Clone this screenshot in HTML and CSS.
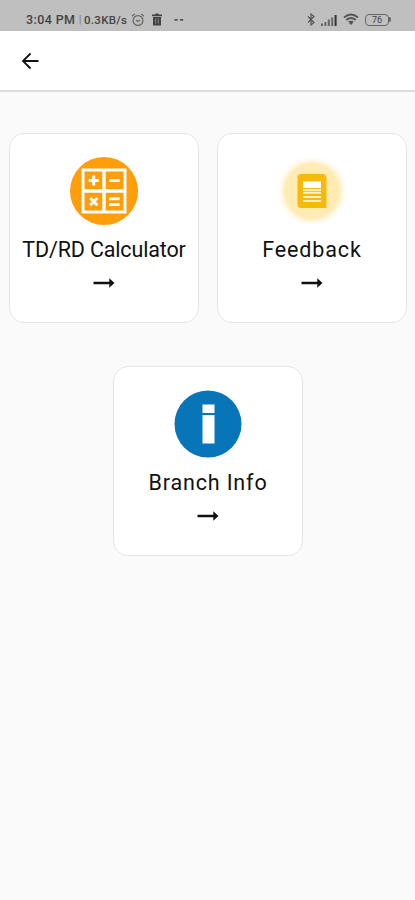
FILE: index.html
```html
<!DOCTYPE html>
<html lang="en">
<head>
    <meta charset="UTF-8">
    <meta name="viewport" content="width=device-width, initial-scale=1.0">
    <title>Services</title>
    <link rel="stylesheet" href="styles.css">
</head>
<body>
    <div class="status-bar">
        <div class="status-left">
            <span class="time">3:04 PM</span>
            <span class="divider">|</span>
            <span class="speed">0.3KB/s</span>
            <svg class="alarm" width="14" height="14" viewBox="0 0 14 14" fill="none" stroke="#666" stroke-width="1.2">
                <circle cx="7" cy="7.5" r="4.9"/>
                <path d="M1 3.2L3.6 1M13 3.2L10.4 1M5 7l2 1.4L9 7"/>
            </svg>
            <svg class="trash" width="12" height="13" viewBox="0 0 12 13">
                <path d="M1 1.5h3l.8-1h2.4l.8 1h3v1.8H1zM2 4h8v8.5H2z" fill="#444"/>
                <path d="M4.7 5.5v5M7.3 5.500v5" stroke="#888" stroke-width="1"/>
            </svg>
            <svg class="more" width="10" height="4" viewBox="0 0 10 4" fill="#555">
                <path d="M.5 1h3.200v1.800H.5zM6 1h3.200v1.800H6z"/>
            </svg>
        </div>
        <div class="status-right">
            <svg width="8" height="13" viewBox="0 0 8 13" fill="none" stroke="#555" stroke-width="1.2">
                <path d="M1 3.5l6 6L4 12V1l3 2.5-6 6"/>
            </svg>
            <svg width="16" height="12" viewBox="0 0 16 12" fill="#666">
                <path d="M0 9.5h2V12H0zM3.4 8h2v4h-2zM6.8 5.5h2V12h-2zM10.2 3.5h2V12h-2z"/>
                <path d="M13.6 1h2v11h-2z" fill="#333"/>
            </svg>
            <svg width="16" height="13" viewBox="0 0 16 13" fill="none" stroke="#555" stroke-width="1.7">
                <path d="M1 4.5Q8-1.5 15 4.5M3.3 7Q8 3 12.7 7"/>
                <path d="M5.2 8.8Q8 6.7 10.8 8.8L8 12z" fill="#555" stroke="none"/>
            </svg>
            <div class="battery">76</div>
        </div>
    </div>

    <header class="header">
        <svg width="18" height="18" viewBox="0 0 18 18" fill="none" stroke="#111" stroke-width="1.8">
            <path d="M17.500 9H2M9.500 1.500L2 9l7.500 7.500"/>
        </svg>
    </header>

    <main class="menu">
        <div class="card">
            <svg class="icon" width="68" height="68" viewBox="0 0 68 68">
                <circle cx="34" cy="34" r="34" fill="#ff9d0a"/>
                <path d="M13 13h42v42H13z" fill="none" stroke="#fff" stroke-width="3"/>
                <path d="M34 13v42M13 34h42" stroke="#fff" stroke-width="3.4"/>
                <path d="M18.7 23.5h10M23.7 18.5v10M39.2 23.5h10.6M39 41.8h10.6M39 47.4h10.6M20.2 41l7.2 7.2M27.4 41l-7.2 7.2" stroke="#fff" stroke-width="3"/>
            </svg>
            <div class="label label-calculator">TD/RD Calculator</div>
            <svg class="arrow" width="22" height="10" viewBox="0 0 22 10">
                <path d="M.5 3.800h15.800V.3L21.500 5l-5.200 4.700V6.200H.5z"/>
            </svg>
        </div>

        <div class="card">
            <div class="icon feedback-icon">
                <svg width="30" height="36" viewBox="0 0 30 36">
                    <path d="M4 1h21.500a4 4 0 0 1 4 4v30H4a3.500 3.500 0 0 1-3.500-3.500v-27A3.500 3.500 0 0 1 4 1z" fill="#f6b90c"/>
                    <path d="M6 8.500h18v6.500H6z" fill="#fff"/>
                    <path d="M6 17h18M6 19.800h18M6 24h18M6 28h18" stroke="#fff0bd" stroke-width="1.900"/>
                </svg>
            </div>
            <div class="label">Feedback</div>
            <svg class="arrow" width="22" height="10" viewBox="0 0 22 10">
                <path d="M.5 3.800h15.800V.3L21.500 5l-5.200 4.700V6.200H.5z"/>
            </svg>
        </div>

        <div class="card">
            <svg class="icon" width="68" height="68" viewBox="0 0 68 68">
                <circle cx="34" cy="34" r="33.500" fill="#0875b9"/>
                <path d="M28.500 14.500h12v8.500h-12zM28.500 25h12v28.500h-12z" fill="#fff"/>
            </svg>
            <div class="label">Branch Info</div>
            <svg class="arrow" width="22" height="10" viewBox="0 0 22 10">
                <path d="M.5 3.800h15.800V.3L21.500 5l-5.200 4.700V6.200H.5z"/>
            </svg>
        </div>
    </main>
</body>
</html>
```

FILE: styles.css
```css
* {
    box-sizing: border-box;
}

body {
    font-family: Roboto, "Liberation Sans", sans-serif;
    margin: 0;
    min-height: 100vh;
    background-color: #fafafa;
    color: #111;
}

svg {
    display: block;
    flex-shrink: 0;
}

.status-bar {
    display: flex;
    justify-content: space-between;
    height: 31px;
    padding: 8px 24px 0 26px;
    background-color: #bfbfbf;
    color: #444;
    font-size: 12px;
}

.status-left,
.status-right {
    display: flex;
    align-items: center;
    height: 23px;
}

.time {
    width: 50px;
    font-size: 12.5px;
    font-weight: 500;
    letter-spacing: 0.4px;
    white-space: nowrap;
}

.divider {
    width: 8px;
    text-align: center;
    font-size: 11px;
    color: #777;
}

.speed {
    width: 44px;
    font-size: 11.5px;
    font-weight: 500;
    letter-spacing: 0.3px;
    white-space: nowrap;
}

.alarm {
    margin-left: 3px;
}

.trash {
    margin-left: 6px;
}

.more {
    margin-left: 11px;
}

.status-right {
    gap: 6px;
}

.battery {
    position: relative;
    width: 24px;
    height: 12px;
    margin-right: 2px;
    border: 1.5px solid #666;
    border-radius: 4px;
    font-size: 9px;
    line-height: 10px;
    text-align: center;
}

.battery::after {
    content: "";
    position: absolute;
    top: 2px;
    right: -3px;
    width: 2px;
    height: 5px;
    border-radius: 0 2px 2px 0;
    background-color: #666;
}

.header {
    display: flex;
    align-items: center;
    height: 61px;
    padding-left: 21px;
    background-color: #fff;
    border-bottom: 2px solid #dedede;
}

.menu {
    display: flex;
    flex-wrap: wrap;
    justify-content: center;
    gap: 43px 18px;
    padding: 41px 8px 0;
}

.card {
    display: flex;
    flex-direction: column;
    align-items: center;
    width: 190px;
    height: 190px;
    padding-top: 23px;
    background-color: #fff;
    border: 1px solid #e6e6e6;
    border-radius: 15px;
}

.icon {
    width: 68px;
    height: 68px;
}

.feedback-icon {
    display: flex;
    align-items: center;
    justify-content: center;
    background: radial-gradient(circle, #ffebb3 27px, #fff0c6 28px, #fff9e8 31px, #fff 35px);
}

.label {
    margin-top: 12px;
    padding-left: 1px;
    font-size: 21.5px;
    line-height: 25px;
    letter-spacing: 0.85px;
    white-space: nowrap;
}

.label-calculator {
    letter-spacing: -0.15px;
}

.arrow {
    margin-top: 16px;
    fill: #111;
}
```
